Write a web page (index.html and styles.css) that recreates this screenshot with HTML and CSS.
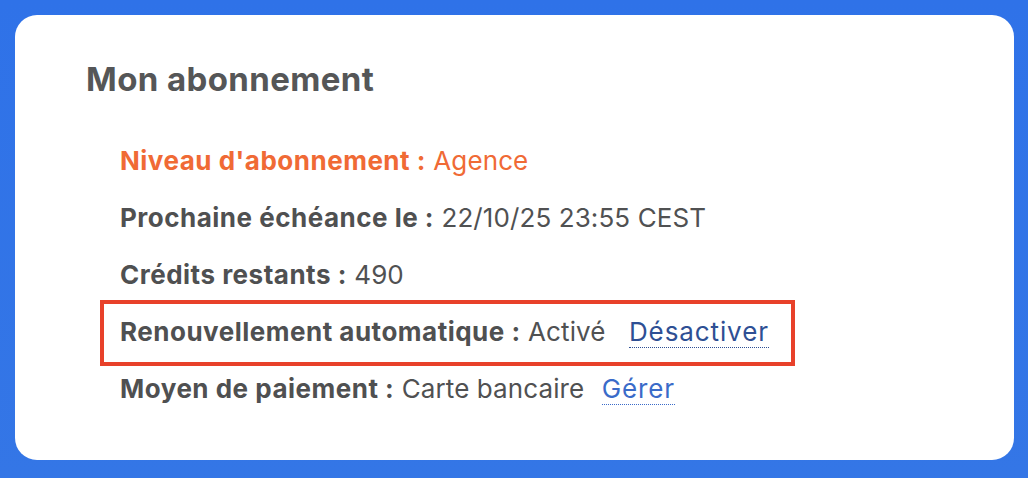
FILE: index.html
```html
<!DOCTYPE html>
<html lang="fr">
<head>
<meta charset="utf-8">
<link rel="stylesheet" href="styles.css">
</head>
<body>
<div class="page">
  <section class="card">
    <h2 class="title">Mon abonnement</h2>
    <ul class="rows">
      <li class="row level"><b>Niveau d'abonnement :</b> Agence</li>
      <li class="row"><b>Prochaine échéance le :</b> 22/10/25 23:55 CEST</li>
      <li class="row"><b>Crédits restants :</b> 490</li>
      <li class="row highlight"><b>Renouvellement automatique :</b> Activé <a class="link dark" href="#">Désactiver</a></li>
      <li class="row"><b>Moyen de paiement :</b> Carte bancaire <a class="link" href="#">Gérer</a></li>
    </ul>
  </section>
</div>
</body>
</html>
```

FILE: styles.css
```css
* { box-sizing: border-box; }
html, body { margin: 0; padding: 0; }
body {
  width: 1028px;
  height: 478px;
  overflow: hidden;
  font-family: "Inter", "Liberation Sans", sans-serif;
}
.page {
  width: 1028px;
  height: 478px;
  background: linear-gradient(180deg, #2f72e8 0%, #3476e6 100%);
  padding: 15px 14px 18px 15px;
}
.card {
  background: #fff;
  border-radius: 22px;
  height: 445px;
  padding: 46px 0 0 71px;
}
.title {
  margin: 0;
  font-size: 33px;
  font-weight: 700;
  letter-spacing: 0.4px;
  color: #555657;
  line-height: 36px;
}
.rows {
  list-style: none;
  margin: 0;
  padding: 49px 0 0 0;
}
.row {
  font-size: 26px;
  letter-spacing: 0.1px;
  color: #505152;
  line-height: 30px;
  padding: 0 0 0 34px;
  margin-bottom: 27px;
}
.row b { font-weight: 700; color: #4f5051; letter-spacing: 0.5px; }
.level, .level b { color: #f06a35; }
.highlight {
  margin: -17px 0 8px 14px;
  padding: 13px 0 15px 16px;
  border: 4px solid #e8412a;
  width: 695px;
}
.link {
  color: #3a6bc9;
  letter-spacing: 0.9px;
  text-decoration: none;
  border-bottom: 1px dotted #3a6bc9;
  margin-left: 10px;
}
.link.dark { color: #2e4f94; border-bottom-color: #2e4f94; margin-left: 16px; }
```
